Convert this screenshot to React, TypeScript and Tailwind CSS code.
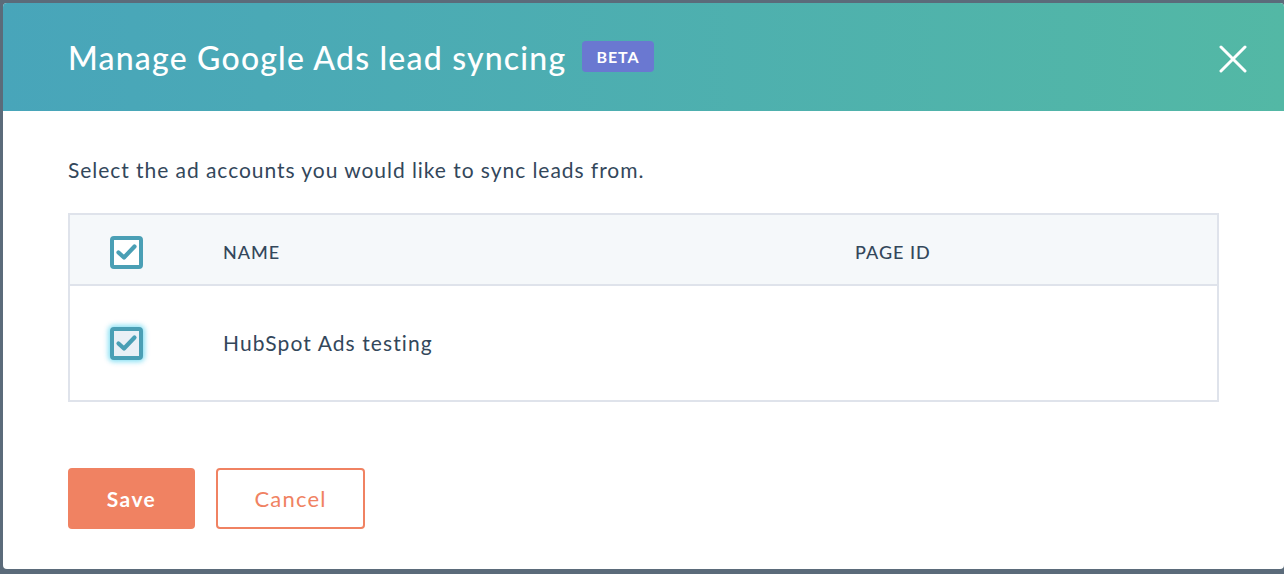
import React from "react";

function Check({ glow }: { glow?: boolean }) {
  return (
    <div
      className={
        "w-[33px] h-[33px] rounded-[4px] border-[4px] border-[#4a9fb5] flex items-center justify-center " +
        (glow ? "bg-[#eaf0f6] shadow-[0_0_5px_2px_rgba(0,189,230,0.45)]" : "bg-white")
      }
    >
      <svg width="25" height="25" viewBox="0 0 25 25">
        <path d="M4.5 12.5 L10 17.5 L20.5 6.5" fill="none" stroke="#4a9fb5" strokeWidth="4.2" strokeLinecap="round" strokeLinejoin="round" />
      </svg>
    </div>
  );
}

export default function App() {
  return (
    <div
      className="w-[1284px] h-[574px] bg-[#5b6b7a] pt-[3px] pl-[3px] pb-[5px] overflow-hidden"
      style={{ fontFamily: "Lato, 'Noto Sans', sans-serif" }}
    >
      <div className="w-[1281px] h-[566px] bg-white rounded-[4px] overflow-hidden flex flex-col">
        <div className="h-[108px] bg-gradient-to-r from-[#48a5ba] to-[#53b8a5] flex items-center pl-[65px] pr-[31px]">
          <h1 className="text-white text-[32px] font-medium tracking-[1.2px] leading-none mt-[2px]">
            Manage Google Ads lead syncing
          </h1>
          <span className="ml-[16px] h-[31px] px-[14px] rounded-[4px] bg-[#6a78d1] text-white text-[16px] font-bold flex items-center tracking-[1px] mt-[-1px]">
            BETA
          </span>
          <button className="ml-auto w-[40px] h-[40px] flex items-center justify-center mt-[4px]">
            <svg width="28" height="28" viewBox="0 0 28 28">
              <path d="M2 2 L26 26 M26 2 L2 26" stroke="white" strokeWidth="3" strokeLinecap="round" />
            </svg>
          </button>
        </div>
        <div className="px-[65px] flex flex-col">
          <p className="mt-[47px] text-[21px] text-[#33475b] leading-[24px] tracking-[0.95px]">
            Select the ad accounts you would like to sync leads from.
          </p>
          <div className="mt-[31px] border-2 border-[#dfe3eb]">
            <div className="h-[71px] pt-[5px] bg-[#f5f8fa] border-b-2 border-[#dfe3eb] flex items-center">
              <div className="w-[153px] pl-[40px]">
                <Check />
              </div>
              <div className="w-[632px] text-[18px] font-medium text-[#33475b] tracking-[1px]">NAME</div>
              <div className="text-[18px] font-medium text-[#33475b] tracking-[1px]">PAGE ID</div>
            </div>
            <div className="h-[114px] flex items-center">
              <div className="w-[153px] pl-[40px]">
                <Check glow />
              </div>
              <div className="text-[21px] text-[#33475b] tracking-[1.1px]">HubSpot Ads testing</div>
            </div>
          </div>
          <div className="mt-[66px] flex gap-[21px]">
            <button className="w-[127px] h-[61px] rounded-[4px] bg-[#f08262] text-white text-[21px] font-bold tracking-[1.4px]">
              Save
            </button>
            <button className="w-[149px] h-[61px] rounded-[4px] border-2 border-[#f08262] text-[#f08262] text-[22px] bg-white tracking-[1.2px]">
              Cancel
            </button>
          </div>
        </div>
      </div>
    </div>
  );
}
